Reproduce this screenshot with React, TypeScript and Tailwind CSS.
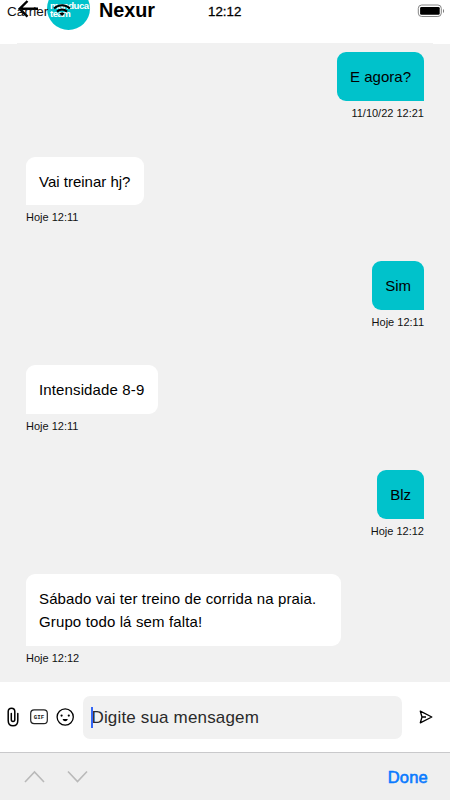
import React, { useState } from "react";

interface Message {
  id: number;
  lines: string[];
  time: string;
  mine?: boolean;
  spaced?: boolean;
}

const messages: Message[] = [
  { id: 1, lines: ["E agora?"], time: "11/10/22 12:21", mine: true },
  { id: 2, lines: ["Vai treinar hj?"], time: "Hoje 12:11" },
  { id: 3, lines: ["Sim"], time: "Hoje 12:11", mine: true },
  { id: 4, lines: ["Intensidade 8-9"], time: "Hoje 12:11", spaced: true },
  { id: 5, lines: ["Blz"], time: "Hoje 12:12", mine: true },
  {
    id: 6,
    lines: ["Sábado vai ter treino de corrida na praia.", "Grupo todo lá sem falta!"],
    time: "Hoje 12:12",
    spaced: true,
  },
];

// The status bar floats over the chat header
const StatusBar = () => (
  <div className="absolute inset-x-0 top-0 h-[22px]">
    <span className="absolute left-[7px] top-[4px] text-[13.5px] leading-4 text-[#111]">Carrier</span>
    <svg className="absolute left-[53px] top-[4px]" width="18" height="12" viewBox="0 0 18 12" fill="none" stroke="#000" strokeWidth="2.1">
      <path d="M1 4.5C5.5 0.1 12.5 0.1 17 4.5" />
      <path d="M4 7.6C7 4.9 11 4.9 14 7.6" />
      <path d="M9 12L6.4 9.4C7.8 8.2 10.2 8.2 11.6 9.4Z" fill="#000" stroke="none" />
    </svg>
    <span className="absolute left-[208px] top-[4px] text-[13.3px] leading-4 [-webkit-text-stroke:0.3px_#000]">12:12</span>
    <svg className="absolute left-[417px] top-[4px]" width="28" height="14" viewBox="0 0 28 14">
      <rect x="1.3" y="1" width="23" height="11.5" rx="3.4" fill="#fff" stroke="#858585" />
      <rect x="3.1" y="2.9" width="19.6" height="7.9" rx="1.4" fill="#000" />
      <path d="M26 5v4c1.4-.6 1.4-3.4 0-4z" fill="#777" />
    </svg>
  </div>
);

const Header = () => (
  <header className="relative h-[43px] shrink-0 overflow-hidden bg-white">
    <div className="-mt-[13px] flex h-[43px] items-center pl-[17.5px]">
      <svg className="shrink-0" width="20" height="18" viewBox="0 0 20 18" fill="none" stroke="#000" strokeWidth="2.4">
        <path d="M9.5 1L1.6 8.8L9.5 16.6M1.6 8.8H20" />
      </svg>
      <div className="ml-[9.5px] flex size-[43px] shrink-0 flex-col justify-center overflow-hidden rounded-full bg-[#00c2cb] pl-[3px] pt-[3px] text-[9.6px] font-bold leading-[8.5px] tracking-[-0.5px] text-white">
        <span>manduca</span>
        <span>team</span>
      </div>
      <h1 className="ml-[9px] pt-[3px] text-[19.8px] font-bold leading-6">Nexur</h1>
    </div>
    <StatusBar />
  </header>
);

const Bubble = ({ message }: { message: Message }) => (
  <div className={`flex h-[104.4px] flex-col ${message.mine ? "items-end" : "items-start"}`}>
    <div
      className={`rounded-[9px] px-[13px] pb-[12px] pt-[14px] text-[15px] leading-[22.7px] ${
        message.mine ? "rounded-br-none bg-[#00c2cb]" : "rounded-bl-none bg-white pr-[13.5px]"
      } ${message.lines.length > 1 ? "w-[315px]" : ""} ${message.spaced ? "tracking-[0.13px]" : ""}`}
    >
      {message.lines.map((line) => (
        <p key={line} className="whitespace-nowrap">
          {line}
        </p>
      ))}
    </div>
    <time className="mt-[4px] text-[11px] leading-4 text-[#111]">{message.time}</time>
  </div>
);

const Composer = () => {
  const [text, setText] = useState("");

  return (
    <div className="flex h-[70px] shrink-0 items-center bg-white">
      <svg className="ml-[7px]" width="12" height="20" viewBox="0 0 12 20" fill="none" stroke="#000" strokeWidth="1.5" strokeLinecap="round">
        <path d="M1.2 5.8V13.5C1.2 16.8 3.2 18.8 6 18.8S10.8 16.8 10.8 13.5V6.5M1.2 5.8V4.5C1.2 2.4 2.5 1.2 4.5 1.2S7.8 2.4 7.8 4.5V12.5C7.8 13.7 7.1 14.5 6 14.5S4.3 13.7 4.3 12.5V6.5" />
      </svg>
      <svg className="ml-[11px]" width="18" height="16" viewBox="0 0 18 16">
        <rect x="0.7" y="0.9" width="16.6" height="13.8" rx="3.4" fill="none" stroke="#222" strokeWidth="1.2" />
        <text x="9" y="9.8" textAnchor="middle" className="fill-[#222] font-['Liberation_Mono',monospace] text-[5.8px] font-bold">
          GIF
        </text>
      </svg>
      <svg className="ml-[8px]" width="18" height="18" viewBox="0 0 18 18" fill="none" stroke="#000" strokeWidth="1.3">
        <circle cx="9.2" cy="9" r="8.1" />
        <circle cx="5.6" cy="7.6" r="1.1" fill="#000" stroke="none" />
        <circle cx="12.8" cy="7.6" r="1.1" fill="#000" stroke="none" />
        <path d="M6.6 11C7.3 14 11.1 14 11.8 11Z" fill="#000" stroke="none" />
      </svg>
      <div className="relative ml-[9px] h-[43px] w-[319px]">
        <input
          value={text}
          onChange={(e) => setText(e.target.value)}
          placeholder="Digite sua mensagem"
          className="h-full w-full rounded-[7px] bg-[#f1f1f1] pl-[8.5px] pt-[2px] text-[17px] tracking-[0.16px] outline-none placeholder:text-[#2a2a2a]"
        />
        <span className="absolute left-[8px] top-[11px] h-[21px] w-[2px] bg-[#3366f5]" />
      </div>
      <svg className="ml-[17px]" width="15" height="14" viewBox="0 0 15 14" fill="none" stroke="#000" strokeWidth="1.3" strokeLinejoin="round">
        <path d="M1.3 1.2L12.8 7L1.3 12.8L3 7ZM3 7H7" />
      </svg>
    </div>
  );
};

const KeyboardBar = () => (
  <div className="flex h-[48px] shrink-0 items-center border-t border-[#c9c9cb] bg-[#efefef] pl-[24px] pr-[22px]">
    <svg width="21" height="13" viewBox="0 0 21 13" fill="none" stroke="#b9b9b9" strokeWidth="1.6">
      <path d="M1 12L10.5 2L20 12" />
    </svg>
    <svg className="ml-[22px]" width="21" height="13" viewBox="0 0 21 13" fill="none" stroke="#b9b9b9" strokeWidth="1.6">
      <path d="M1 1.5L10.5 11.5L20 1.5" />
    </svg>
    <button className="ml-auto text-[16.5px] leading-5 tracking-[0.2px] text-[#0a7aff] [-webkit-text-stroke:0.6px_#0a7aff]">
      Done
    </button>
  </div>
);

export default function App() {
  return (
    <div className="flex h-[800px] w-[450px] flex-col overflow-hidden bg-white font-['Liberation_Sans',Arial,sans-serif] text-black">
      <Header />
      {/* the list edges start slightly below its middle */}
      <div className="h-px shrink-0 px-[17px]">
        <div className="h-full bg-[#f1f1f1]" />
      </div>
      <main className="h-[638px] shrink-0 overflow-hidden bg-[#f1f1f1] px-[26px] pt-[8.3px]">
        {messages.map((message) => (
          <Bubble key={message.id} message={message} />
        ))}
      </main>
      <Composer />
      <KeyboardBar />
    </div>
  );
}
